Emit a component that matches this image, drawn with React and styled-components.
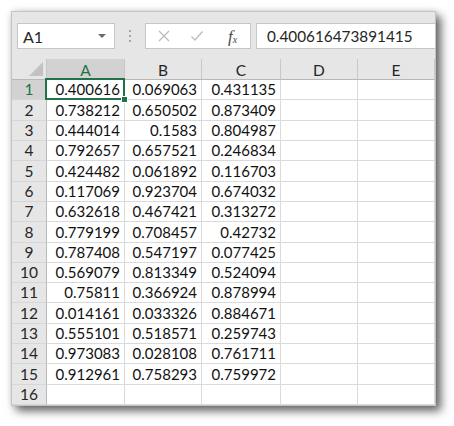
import React from "react";
import styled, { createGlobalStyle } from "styled-components";

const Global = createGlobalStyle`
  html, body { margin: 0; padding: 0; background: #ffffff; }
  body { width: 454px; height: 426px; overflow: hidden; font-family: Lato, "Open Sans", sans-serif; }
`;

const data = [
  ["0.400616", "0.069063", "0.431135"],
  ["0.738212", "0.650502", "0.873409"],
  ["0.444014", "0.1583", "0.804987"],
  ["0.792657", "0.657521", "0.246834"],
  ["0.424482", "0.061892", "0.116703"],
  ["0.117069", "0.923704", "0.674032"],
  ["0.632618", "0.467421", "0.313272"],
  ["0.779199", "0.708457", "0.42732"],
  ["0.787408", "0.547197", "0.077425"],
  ["0.569079", "0.813349", "0.524094"],
  ["0.75811", "0.366924", "0.878994"],
  ["0.014161", "0.033326", "0.884671"],
  ["0.555101", "0.518571", "0.259743"],
  ["0.973083", "0.028108", "0.761711"],
  ["0.912961", "0.758293", "0.759972"],
  ["", "", ""],
];

const cols = ["A", "B", "C", "D", "E"];

const Window = styled.div`
  margin: 11px 0 0 11px;
  width: 423px;
  height: 393px;
  border: 1px solid #c4c4c4;
  background: #ffffff;
  box-shadow: 5px 5px 9px rgba(0, 0, 0, 0.6), 0 0 6px rgba(0, 0, 0, 0.12);
  display: flex;
  flex-direction: column;
  overflow: hidden;
`;

const Toolbar = styled.div`
  height: 47px;
  box-sizing: border-box;
  background: #e6e6e6;
  padding: 11px 0 0 5px;
  display: flex;
  align-items: flex-start;
`;

const NameBox = styled.div`
  width: 98px;
  height: 26px;
  box-sizing: border-box;
  background: #fff;
  border: 1px solid #c6c6c6;
  display: flex;
  align-items: center;
  justify-content: space-between;
  padding: 0 8px 0 5px;
  font-size: 16px;
  color: #262626;
`;

const Arrow = styled.span`
  width: 0;
  height: 0;
  border-left: 4px solid transparent;
  border-right: 4px solid transparent;
  border-top: 4px solid #6a6a6a;
`;

const Dots = styled.div`
  width: 30px;
  height: 26px;
  display: flex;
  flex-direction: column;
  align-items: center;
  justify-content: center;
  gap: 3px;
  & > span {
    width: 2px;
    height: 2px;
    background: #a6a6a6;
  }
`;

const FxBox = styled.div`
  width: 106px;
  height: 26px;
  box-sizing: border-box;
  background: #fff;
  border: 1px solid #c6c6c6;
  display: flex;
  align-items: center;
  padding-left: 11px;
  gap: 19px;
`;

const FxLabel = styled.span`
  font-family: "Liberation Serif", serif;
  font-style: italic;
  font-size: 17px;
  color: #4a4a4a;
  margin-left: 5px;
  line-height: 1;
  & sub {
    font-size: 10px;
    vertical-align: -1px;
  }
`;

const Formula = styled.div`
  flex: 1;
  margin-left: 5px;
  height: 26px;
  box-sizing: border-box;
  background: #fff;
  border: 1px solid #c6c6c6;
  border-right: none;
  display: flex;
  align-items: center;
  padding-left: 10px;
  font-size: 15.3px;
  color: #262626;
`;

const Grid = styled.div`
  display: grid;
  grid-template-columns: 35px 78px 77px 79px 77px 77px;
  grid-template-rows: 21px repeat(16, 20.32px);
  flex: 1;
`;

const Corner = styled.div`
  background: #e6e6e6;
  border-right: 1px solid #c8c8c8;
  border-bottom: 1px solid #b8b8b8;
  position: relative;
  &::after {
    content: "";
    position: absolute;
    right: 3px;
    bottom: 3px;
    width: 0;
    height: 0;
    border-left: 14px solid transparent;
    border-bottom: 14px solid #c2c2c2;
  }
`;

const ColHead = styled.div`
  background: ${(p) => (p.$sel ? "#d2d2d2" : "#e6e6e6")};
  color: ${(p) => (p.$sel ? "#217346" : "#262626")};
  border-right: 1px solid #c8c8c8;
  border-bottom: 1px solid #b8b8b8;
  display: flex;
  align-items: center;
  justify-content: center;
  font-size: 15.5px;
  padding-top: 1px;
`;

const RowHead = styled.div`
  background: ${(p) => (p.$sel ? "#d2d2d2" : "#e6e6e6")};
  color: ${(p) => (p.$sel ? "#217346" : "#262626")};
  border-right: 1px solid #b8b8b8;
  border-bottom: 1px solid #d6d6d6;
  display: flex;
  align-items: flex-end;
  justify-content: center;
  font-size: 15.5px;
  line-height: 18px;
  padding-bottom: 1px;
  box-sizing: border-box;
`;

const Cell = styled.div`
  border-right: 1px solid #dadada;
  border-bottom: 1px solid #dadada;
  display: flex;
  align-items: flex-end;
  justify-content: flex-end;
  padding: 0 4px 1px 0;
  box-sizing: border-box;
  font-size: 15px;
  line-height: 18px;
  color: #111;
  position: relative;
  ${(p) =>
    p.$active &&
    `
    &::before {
      content: "";
      position: absolute;
      left: -2px; top: -2px; right: -1px; bottom: -1px;
      border: 2px solid #217346;
    }
    &::after {
      content: "";
      position: absolute;
      right: -4px; bottom: -4px;
      width: 5px; height: 5px;
      background: #217346;
      border: 1px solid #fff;
      z-index: 2;
    }
  `}
`;

const Icon = ({ children }) => (
  <svg width="14" height="14" viewBox="0 0 14 14" fill="none" stroke="#bdbdbd" strokeWidth="1.4">
    {children}
  </svg>
);

export default function App() {
  return (
    <>
      <Global />
      <Window>
        <Toolbar>
          <NameBox>
            A1
            <Arrow />
          </NameBox>
          <Dots>
            <span />
            <span />
            <span />
          </Dots>
          <FxBox>
            <Icon>
              <path d="M2 2 L12 12 M12 2 L2 12" />
            </Icon>
            <Icon>
              <path d="M1.5 7.5 L5 11 L12.5 2.5" />
            </Icon>
            <FxLabel>
              f<sub>x</sub>
            </FxLabel>
          </FxBox>
          <Formula>0.400616473891415</Formula>
        </Toolbar>
        <Grid>
          <Corner />
          {cols.map((c) => (
            <ColHead key={c} $sel={c === "A"}>
              {c}
            </ColHead>
          ))}
          {data.map((row, i) => (
            <React.Fragment key={i}>
              <RowHead $sel={i === 0}>{i + 1}</RowHead>
              {[...row, "", ""].map((v, j) => (
                <Cell key={j} $active={i === 0 && j === 0}>
                  {v}
                </Cell>
              ))}
            </React.Fragment>
          ))}
        </Grid>
      </Window>
    </>
  );
}
